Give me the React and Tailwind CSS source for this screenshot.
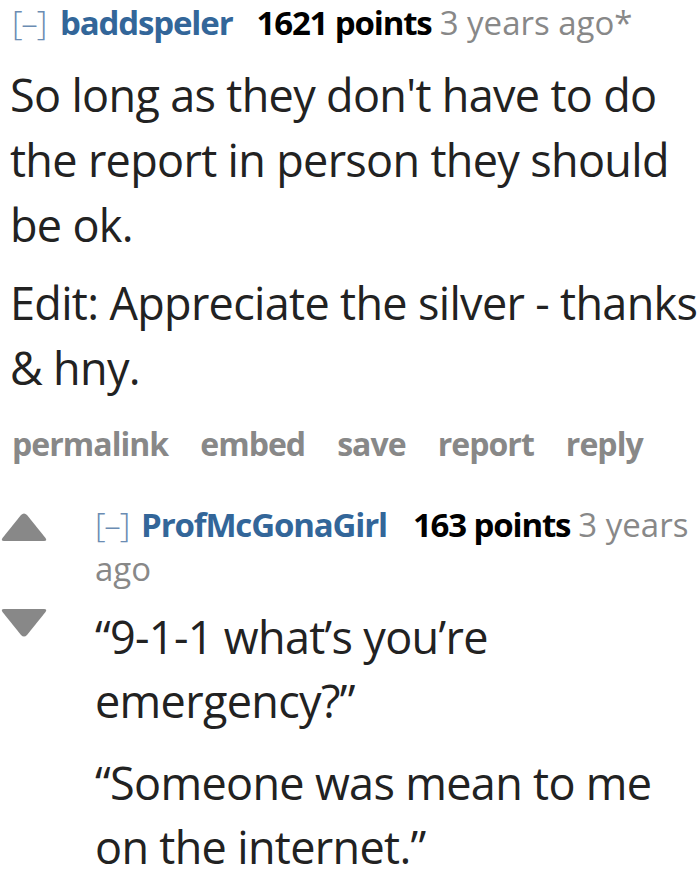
import React from "react";

const font = { fontFamily: '"Open Sans", "Noto Sans", sans-serif' };

function Triangle({ down }) {
  return (
    <svg width="48" height="30" viewBox="0 0 48 30" className="block">
      {down ? (
        <path d="M4 1 L44 1 Q47.5 1 45.5 4 L27 27 Q24 30 21 27 L2.5 4 Q0.5 1 4 1 Z" fill="#888888" />
      ) : (
        <path d="M4 29 L44 29 Q47.5 29 45.5 26 L27 3 Q24 0 21 3 L2.5 26 Q0.5 29 4 29 Z" fill="#888888" />
      )}
    </svg>
  );
}

export default function App() {
  return (
    <div className="w-[700px] min-h-[877px] bg-white overflow-hidden" style={font}>
      {/* parent comment */}
      <div className="pl-[12px]">
        <div className="text-[33px] leading-[45px] tracking-[-0.035em] whitespace-nowrap">
          <span className="text-[#6b8cb3] font-light">[–]</span>
          <span className="ml-[14px] font-bold text-[#336699]">baddspeler</span>
          <span className="ml-[24px] font-bold text-black">1621 points</span>
          <span className="ml-[8px] text-[#888888] tracking-[0em]">3 years ago*</span>
        </div>
      </div>
      <div className="pl-[10px] text-[#222222] text-[45px] leading-[65px] tracking-[-0.015em]">
        <p className="mt-[17px]">So long as they don't have to do the report in person they should be ok.</p>
        <p className="mt-[13px]">Edit: Appreciate the silver - thanks &amp; hny.</p>
      </div>
      <div className="pl-[12px] mt-[24px] flex gap-[32px] text-[32px] leading-[40px] font-bold text-[#888888] tracking-[-0.03em]">
        <span>permalink</span>
        <span>embed</span>
        <span>save</span>
        <span>report</span>
        <span>reply</span>
      </div>

      {/* child comment */}
      <div className="flex mt-[39px]">
        <div className="w-[95px] shrink-0 flex flex-col pt-[9px] gap-[66px]">
          <Triangle />
          <Triangle down />
        </div>
        <div className="flex-1">
          <div className="text-[33px] leading-[44px] tracking-[-0.035em]">
            <span className="text-[#6b8cb3] font-light">[–]</span>
            <span className="ml-[12px] font-bold text-[#336699]">ProfMcGonaGirl</span>
            <span className="ml-[26px] font-bold text-black">163 points</span>
            <span className="ml-[8px] text-[#888888] tracking-[0em]">3 years</span>{" "}
            <span className="text-[#888888] tracking-[0em]">ago</span>
          </div>
          <div className="pr-[24px] text-[#222222] text-[45px] leading-[64px] tracking-[-0.015em]">
            <p className="mt-[14px]">“9-1-1 what’s you’re emergency?”</p>
            <p className="mt-[18px]">“Someone was mean to me on the internet.”</p>
          </div>
        </div>
      </div>
    </div>
  );
}
